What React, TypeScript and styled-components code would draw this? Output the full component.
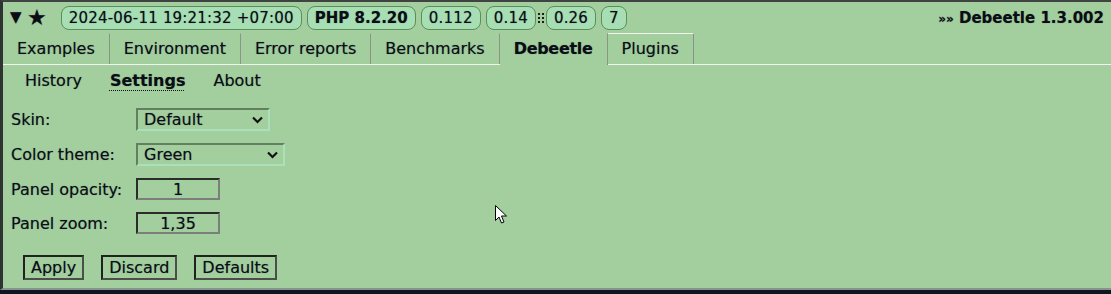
import React from 'react';
import styled, { createGlobalStyle } from 'styled-components';

const GlobalStyle = createGlobalStyle`
  html, body {
    margin: 0;
    padding: 0;
    background: #0d1821;
  }
  body {
    font-family: 'DejaVu Sans', Verdana, sans-serif;
  }
`;

const App = () => {
  return (
    <>
      <GlobalStyle />
      <Panel>
        {/* Top bar */}
        <TopBar>
          <Toggle>▼</Toggle>
          <Star>★</Star>
          <Pills>
            <Pill>2024-06-11 19:21:32 +07:00</Pill>
            <Pill $bold>PHP 8.2.20</Pill>
            <Pill>0.112</Pill>
            <Pill>0.14</Pill>
            <Dots width="6" height="11" viewBox="0 0 6 11">
              <rect x="0" y="0" width="2" height="2" />
              <rect x="4" y="0" width="2" height="2" />
              <rect x="0" y="4" width="2" height="2" />
              <rect x="4" y="4" width="2" height="2" />
              <rect x="0" y="8" width="2" height="2" />
              <rect x="4" y="8" width="2" height="2" />
            </Dots>
            <Pill>0.26</Pill>
            <Pill>7</Pill>
          </Pills>
          <Brand>
            <Quote>»»</Quote> Debeetle 1.3.002
          </Brand>
        </TopBar>

        {/* Main tabs */}
        <Tabs>
          <Tab>Examples</Tab>
          <Tab>Environment</Tab>
          <Tab>Error reports</Tab>
          <Tab>Benchmarks</Tab>
          <Tab $active>Debeetle</Tab>
          <Tab $raised>Plugins</Tab>
        </Tabs>

        {/* Sub tabs */}
        <SubNav>
          <SubTab>History</SubTab>
          <SubTab $active>Settings</SubTab>
          <SubTab>About</SubTab>
        </SubNav>

        {/* Settings form */}
        <Form>
          <Label>Skin:</Label>
          <SelectBox $width={134}>
            <Select defaultValue="default">
              <option value="default">Default</option>
            </Select>
            <Chevron width="11" height="8" viewBox="0 0 11 8">
              <path d="M1 1.5 L5.5 6 L10 1.5" />
            </Chevron>
          </SelectBox>

          <Label>Color theme:</Label>
          <SelectBox $width={149}>
            <Select defaultValue="green">
              <option value="green">Green</option>
            </Select>
            <Chevron width="11" height="8" viewBox="0 0 11 8">
              <path d="M1 1.5 L5.5 6 L10 1.5" />
            </Chevron>
          </SelectBox>

          <Label>Panel opacity:</Label>
          <NumberInput defaultValue="1" />

          <Label>Panel zoom:</Label>
          <NumberInput defaultValue="1,35" />
        </Form>

        <Buttons>
          <Button>Apply</Button>
          <Button>Discard</Button>
          <Button>Defaults</Button>
        </Buttons>

        <Cursor width="13" height="20" viewBox="0 0 13 20">
          <path d="M0.5 0.5 L0.5 15.5 L4 12 L6.5 18 L9 17 L6.5 11 L11.5 11 Z" />
        </Cursor>
      </Panel>
    </>
  );
};

export default App;

/* Styled Components */
const Panel = styled.div`
  position: relative;
  box-sizing: border-box;
  height: 290px;
  background: #a3cf9f;
  border-top: 2px solid #3f4442;
  border-left: 3px solid #2f3331;
  border-bottom: 2px solid #8b918c;
  color: #0b0d14;
  text-shadow: 0 0 1px rgba(0, 0, 40, 0.4);
  font-size: 16px;
`;

const TopBar = styled.div`
  display: flex;
  align-items: center;
  height: 29px;
  padding: 3px 7px 0 7px;
  box-sizing: border-box;
`;

const Toggle = styled.span`
  font-size: 15px;
  width: 12px;
  line-height: 1;
  margin-top: -1px;
`;

const Star = styled.span`
  font-size: 22px;
  line-height: 1;
  margin-left: 5px;
  margin-top: -1px;
`;

const Pills = styled.div`
  display: flex;
  align-items: center;
  gap: 5px;
  margin-left: 14px;
`;

const Pill = styled.span<{ $bold?: boolean }>`
  display: inline-flex;
  align-items: center;
  height: 24px;
  box-sizing: border-box;
  padding: 0 7px;
  border: 1px solid #5b8d5d;
  border-radius: 8px;
  background: #a7deb3;
  font-size: 15px;
  font-weight: ${(p) => (p.$bold ? 700 : 400)};
  letter-spacing: ${(p) => (p.$bold ? '0' : '0.2px')};
`;

const Dots = styled.svg`
  fill: #1a1f1a;
  margin: 0 -3px 0 -3px;
`;

const Brand = styled.span`
  margin-left: auto;
  font-weight: 700;
  font-size: 15px;
`;

const Quote = styled.span`
  font-size: 12px;
`;

const Tabs = styled.div`
  display: flex;
  height: 34px;
  padding-top: 2px;
  box-sizing: border-box;
  border-bottom: 1px solid #f2f5ef;
`;

const Tab = styled.div<{ $active?: boolean; $raised?: boolean }>`
  display: flex;
  align-items: center;
  padding: 0 14px 2px 14px;
  border-right: 1px solid #8c938b;
  border-top: 1px solid ${(p) => (p.$raised ? '#f2f5ef' : 'transparent')};
  font-weight: ${(p) => (p.$active ? 700 : 400)};
  letter-spacing: ${(p) => (p.$active ? '-0.3px' : '0')};
  margin-bottom: ${(p) => (p.$active ? '-1px' : '0')};
  background: #a3cf9f;
`;

const SubNav = styled.div`
  display: flex;
  align-items: center;
  height: 31px;
  padding: 0 0 2px 8px;
`;

const SubTab = styled.span<{ $active?: boolean }>`
  padding: 0 14px;
  font-weight: ${(p) => (p.$active ? 700 : 400)};

  ${(p) =>
    p.$active &&
    `
    text-decoration: underline dotted;
    text-underline-offset: 4px;
    text-decoration-thickness: 1px;
  `}
`;

const Form = styled.div`
  display: grid;
  grid-template-columns: 125px max-content;
  row-gap: 12px;
  align-items: center;
  padding: 10px 0 0 8px;
`;

const Label = styled.span`
  font-size: 16px;
`;

const SelectBox = styled.div<{ $width: number }>`
  position: relative;
  width: ${(p) => p.$width}px;
  height: 23px;
`;

const Select = styled.select`
  appearance: none;
  width: 100%;
  height: 100%;
  box-sizing: border-box;
  margin: 0;
  padding: 0 0 0 6px;
  border: 2px solid;
  border-color: #627f62 #a9e2ba #a9e2ba #627f62;
  background: #a3cf9f;
  color: #0b0d14;
  font-family: 'DejaVu Sans', Verdana, sans-serif;
  font-size: 16px;
  text-shadow: 0 0 1px rgba(0, 0, 40, 0.4);
  outline: none;
`;

const Chevron = styled.svg`
  position: absolute;
  right: 7px;
  top: 8px;
  fill: none;
  stroke: #111;
  stroke-width: 2.2;
  pointer-events: none;
`;

const NumberInput = styled.input`
  width: 84px;
  height: 22px;
  box-sizing: border-box;
  margin: 0;
  padding: 0;
  border: 2px solid;
  border-color: #2a2d2a #7a7f7a #7a7f7a #2a2d2a;
  background: #a3cf9f;
  color: #0b0d14;
  text-align: center;
  font-family: 'DejaVu Sans', Verdana, sans-serif;
  font-size: 16px;
  text-shadow: 0 0 1px rgba(0, 0, 40, 0.4);
`;

const Buttons = styled.div`
  display: flex;
  gap: 17px;
  margin: 21px 0 0 20px;
`;

const Button = styled.button`
  height: 25px;
  box-sizing: border-box;
  padding: 0 6px;
  border: 2px solid;
  border-color: #1f221f #4a4f4a #4a4f4a #1f221f;
  background: #a3cf9f;
  color: #0b0d14;
  font-family: 'DejaVu Sans', Verdana, sans-serif;
  font-size: 16px;
  text-shadow: 0 0 1px rgba(0, 0, 40, 0.4);
`;

const Cursor = styled.svg`
  position: absolute;
  left: 492px;
  top: 203px;
  fill: #fff;
  stroke: #000;
  stroke-width: 1;
`;
